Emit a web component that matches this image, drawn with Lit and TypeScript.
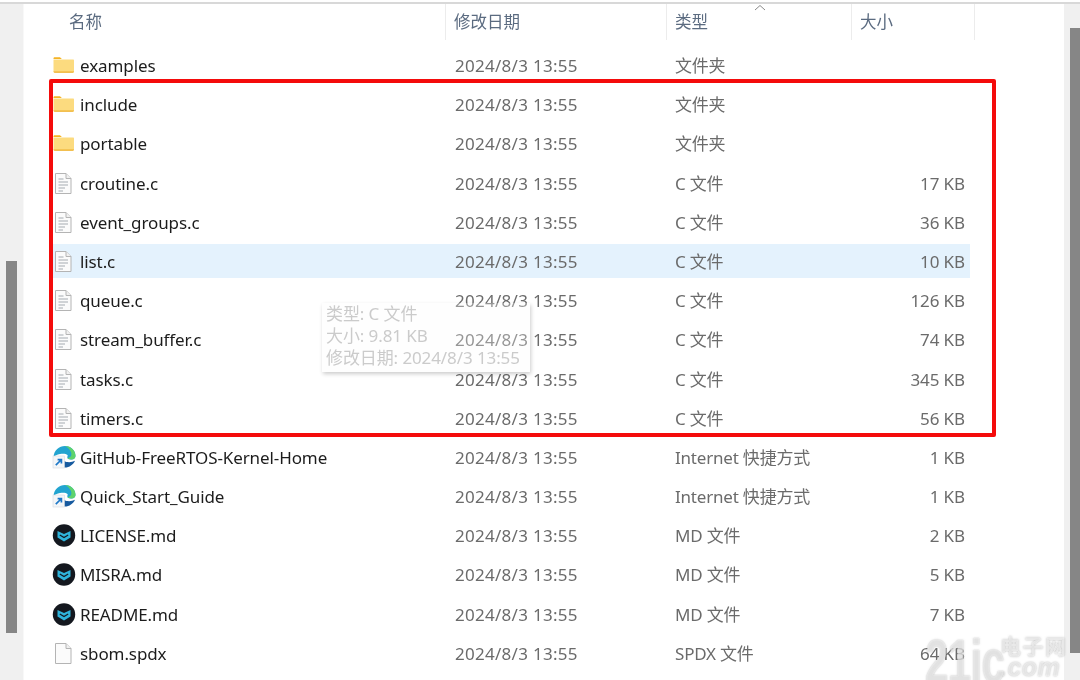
import { LitElement, html, css, svg } from "lit";
import { customElement } from "lit/decorators.js";

type Kind = "folder" | "c" | "edge" | "md" | "blank";
interface Row { n: string; k: Kind; t: string; s: string; hl?: boolean }

const rows: Row[] = [
  { n: "examples", k: "folder", t: "文件夹", s: "" },
  { n: "include", k: "folder", t: "文件夹", s: "" },
  { n: "portable", k: "folder", t: "文件夹", s: "" },
  { n: "croutine.c", k: "c", t: "C 文件", s: "17 KB" },
  { n: "event_groups.c", k: "c", t: "C 文件", s: "36 KB" },
  { n: "list.c", k: "c", t: "C 文件", s: "10 KB", hl: true },
  { n: "queue.c", k: "c", t: "C 文件", s: "126 KB" },
  { n: "stream_buffer.c", k: "c", t: "C 文件", s: "74 KB" },
  { n: "tasks.c", k: "c", t: "C 文件", s: "345 KB" },
  { n: "timers.c", k: "c", t: "C 文件", s: "56 KB" },
  { n: "GitHub-FreeRTOS-Kernel-Home", k: "edge", t: "Internet 快捷方式", s: "1 KB" },
  { n: "Quick_Start_Guide", k: "edge", t: "Internet 快捷方式", s: "1 KB" },
  { n: "LICENSE.md", k: "md", t: "MD 文件", s: "2 KB" },
  { n: "MISRA.md", k: "md", t: "MD 文件", s: "5 KB" },
  { n: "README.md", k: "md", t: "MD 文件", s: "7 KB" },
  { n: "sbom.spdx", k: "blank", t: "SPDX 文件", s: "64 KB" },
];

const page = svg`<path d="M3.5 2.5H14L19 7.5V22.5H3.5Z" fill="#fbfbfb" stroke="#b4b4b4"/><path d="M14 2.5V7.5H19" fill="#f0f0f0" stroke="#b4b4b4"/>`;

const icons: Record<Kind, unknown> = {
  folder: svg`<path d="M1.5 5.5C1.5 4.8 2 4.3 2.8 4.3H8L9.8 6H1.5Z" fill="#f5b324"/><path d="M1.5 6.6H21C21.6 6.6 22 7 22 7.6V18.3C22 19 21.6 19.6 20.8 19.6H2.7C2 19.6 1.5 19 1.5 18.3Z" fill="#fcdb7f"/><path d="M1.5 18.4H22V18.6C22 19.2 21.5 19.7 20.9 19.7H2.6C2 19.7 1.5 19.2 1.5 18.6Z" fill="#eeb02c"/>`,
  c: svg`${page}<path d="M6.5 8H11.5M6.5 11H16M6.5 14H16M6.5 17H13M6.5 20H11" stroke="#c2c6ca" stroke-width="1.3"/>`,
  blank: page,
  edge: svg`
    <path d="M1.5 12C2.2 5 7 1 13 1C19 1 23.5 5.5 23.5 11C23.5 13 22 14.4 19.5 14.4C17 14.4 15.3 13.8 15.3 12.4C15.3 11.2 16 10.8 15.5 10C14 8.6 11 8.4 8 9C5 9.6 3 10.5 1.5 12Z" fill="#22a4d0"/>
    <path d="M13 1C19 1 23.5 5.5 23.5 11C23.5 13 22 14.4 19.5 14.4C17.8 14.4 16.2 14 15.6 13.2C19.5 12.6 20 9.5 18.8 6.8C17.6 4.2 15.5 2.2 13 1Z" fill="#5ed36c"/>
    <path d="M11.5 22.5C10.5 21 10.5 18 12 16C15 17.6 19.5 17.6 23 15.8C21.2 20 16.5 23.2 11.5 22.5Z" fill="#175a9f"/>
    <rect x="1" y="11" width="11.5" height="12" fill="#f4f6f8" stroke="#d5dae0" stroke-width=".6"/>
    <path d="M3.8 20.2L9 15M5.6 14.6H9.4V18.4" fill="none" stroke="#1e78c8" stroke-width="1.7"/>`,
  md: svg`<circle cx="12" cy="12.5" r="11.2" fill="#14181f"/><path d="M5.5 8L12 11L18.5 8V14.5L12 18.5L5.5 14.5Z" fill="#2fb4dc"/><path d="M7.8 12L12 14.6L16.2 12" fill="none" stroke="#14181f" stroke-width="1.2"/>`,
};

@customElement("app-root")
export class AppRoot extends LitElement {
  static styles = css`
    :host {
      display: block;
      width: 1080px;
      height: 680px;
      position: relative;
      overflow: hidden;
      background: #fff;
      font-family: "Noto Sans", "Noto Sans CJK SC", sans-serif;
      font-size: 17px;
      letter-spacing: -0.1px;
      filter: blur(0.3px);
    }
    .topline { height: 2px; margin-top: 2px; background: #d8d8d8; }
    .shell { display: flex; height: 676px; }
    .gutter {
      width: 24px;
      flex: none;
      background: #f0f0f0;
      border-right: 1px solid #f8f8f8;
      box-sizing: border-box;
      padding: 257px 0 0 6px;
    }
    .thumb-left { width: 11px; height: 372px; background: #868686; }
    .main { flex: 1; min-width: 0; }
    .right {
      width: 16px;
      flex: none;
      background: #f0f0f0;
      display: flex;
      justify-content: flex-end;
      padding-top: 24px;
      box-sizing: border-box;
    }
    .thumb-right { width: 10px; height: 625px; background: #868686; }
    .head {
      display: grid;
      grid-template-columns: 398px 221px 185px 123px;
      height: 36px;
      margin-left: -1px;
      padding-left: 25px;
      font-size: 16.5px;
      color: #5b6b80;
      letter-spacing: 0;
    }
    .head > div {
      position: relative;
      padding-top: 6px;
      line-height: 24px;
      box-sizing: border-box;
      border-right: 1px solid #ececec;
      padding-left: 8px;
    }
    .head > div:first-child { padding-left: 21px; }
    .caret { position: absolute; left: 87px; top: 0; width: 12px; height: 7px; }
    .list {
      display: flex;
      flex-direction: column;
      gap: 5.2px;
      padding: 8.5px 0 0 28px;
    }
    .row {
      display: grid;
      grid-template-columns: 403px 220px 1fr 80px;
      width: 918px;
      height: 34px;
      align-items: center;
      color: #6b6b6b;
    }
    .row.hl { background: #e4f2fd; }
    .name { display: flex; align-items: center; gap: 3px; color: #1c1c1c; }
    .name svg { width: 25px; height: 25px; flex: none; }
    .date { letter-spacing: 0.28px; }
    .type { padding-bottom: 2px; letter-spacing: -0.2px; }
    .size { text-align: right; padding-right: 5px; }
    .redbox {
      position: absolute;
      left: 49px;
      top: 79px;
      width: 947px;
      height: 358px;
      box-sizing: border-box;
      border: 4px solid #f40b0b;
      border-radius: 2px;
      pointer-events: none;
    }
    .tip {
      position: absolute;
      left: 322px;
      top: 303px;
      width: 208px;
      height: 69px;
      box-sizing: border-box;
      padding: 0 4px;
      background: rgba(252, 252, 252, 0.3);
      box-shadow: 1px 2px 4px rgba(0, 0, 0, 0.2);
      font-size: 17px;
      line-height: 22px;
      color: #cbcbcb;
      letter-spacing: -0.1px;
      white-space: nowrap;
    }
    .mark {
      position: absolute;
      left: 925px;
      top: 630px;
      width: 155px;
      display: flex;
      color: rgba(255, 255, 255, 0.6);
      pointer-events: none;
      text-shadow: 0 0 2px rgba(110, 110, 110, 0.5);
      font-family: "Liberation Sans", sans-serif;
      font-weight: 700;
      white-space: nowrap;
    }
    .mark .big {
      width: 75px;
      flex: none;
      font-size: 62px;
      line-height: 62px;
      letter-spacing: -1px;
      transform: scaleX(0.68);
      transform-origin: left top;
    }
    .mark .side { display: flex; flex-direction: column; padding-top: 5px; }
    .mark .cn {
      font-family: "Noto Sans CJK SC", sans-serif;
      font-size: 21px;
      font-weight: 700;
      line-height: 21px;
      letter-spacing: 1.5px;
    }
    .mark .com { font-size: 25px; font-style: italic; line-height: 22px; letter-spacing: 0.5px; }
  `;

  render() {
    return html`
      <div class="topline"></div>
      <div class="shell">
        <div class="gutter"><div class="thumb-left"></div></div>
        <div class="main">
          <div class="head">
            <div>名称</div>
            <div>修改日期</div>
            <div>类型
              <svg class="caret" viewBox="0 0 12 7"><path d="M1 6L6 1.5L11 6" fill="none" stroke="#8a8a8a" stroke-width="1"/></svg>
            </div>
            <div>大小</div>
          </div>
          <div class="list">
            ${rows.map(
              (r) => html`<div class="row ${r.hl ? "hl" : ""}">
                <div class="name"><svg viewBox="0 0 25 25">${icons[r.k]}</svg><span>${r.n}</span></div>
                <div class="date">2024/8/3 13:55</div>
                <div class="type">${r.t}</div>
                <div class="size">${r.s}</div>
              </div>`
            )}
          </div>
        </div>
        <div class="right"><div class="thumb-right"></div></div>
      </div>
      <div class="redbox"></div>
      <div class="tip">
        <div>类型: C 文件</div>
        <div>大小: 9.81 KB</div>
        <div>修改日期: 2024/8/3 13:55</div>
      </div>
      <div class="mark">
        <div class="big">21ic</div>
        <div class="side"><span class="cn">电子网</span><span class="com">.com</span></div>
      </div>
    `;
  }
}
